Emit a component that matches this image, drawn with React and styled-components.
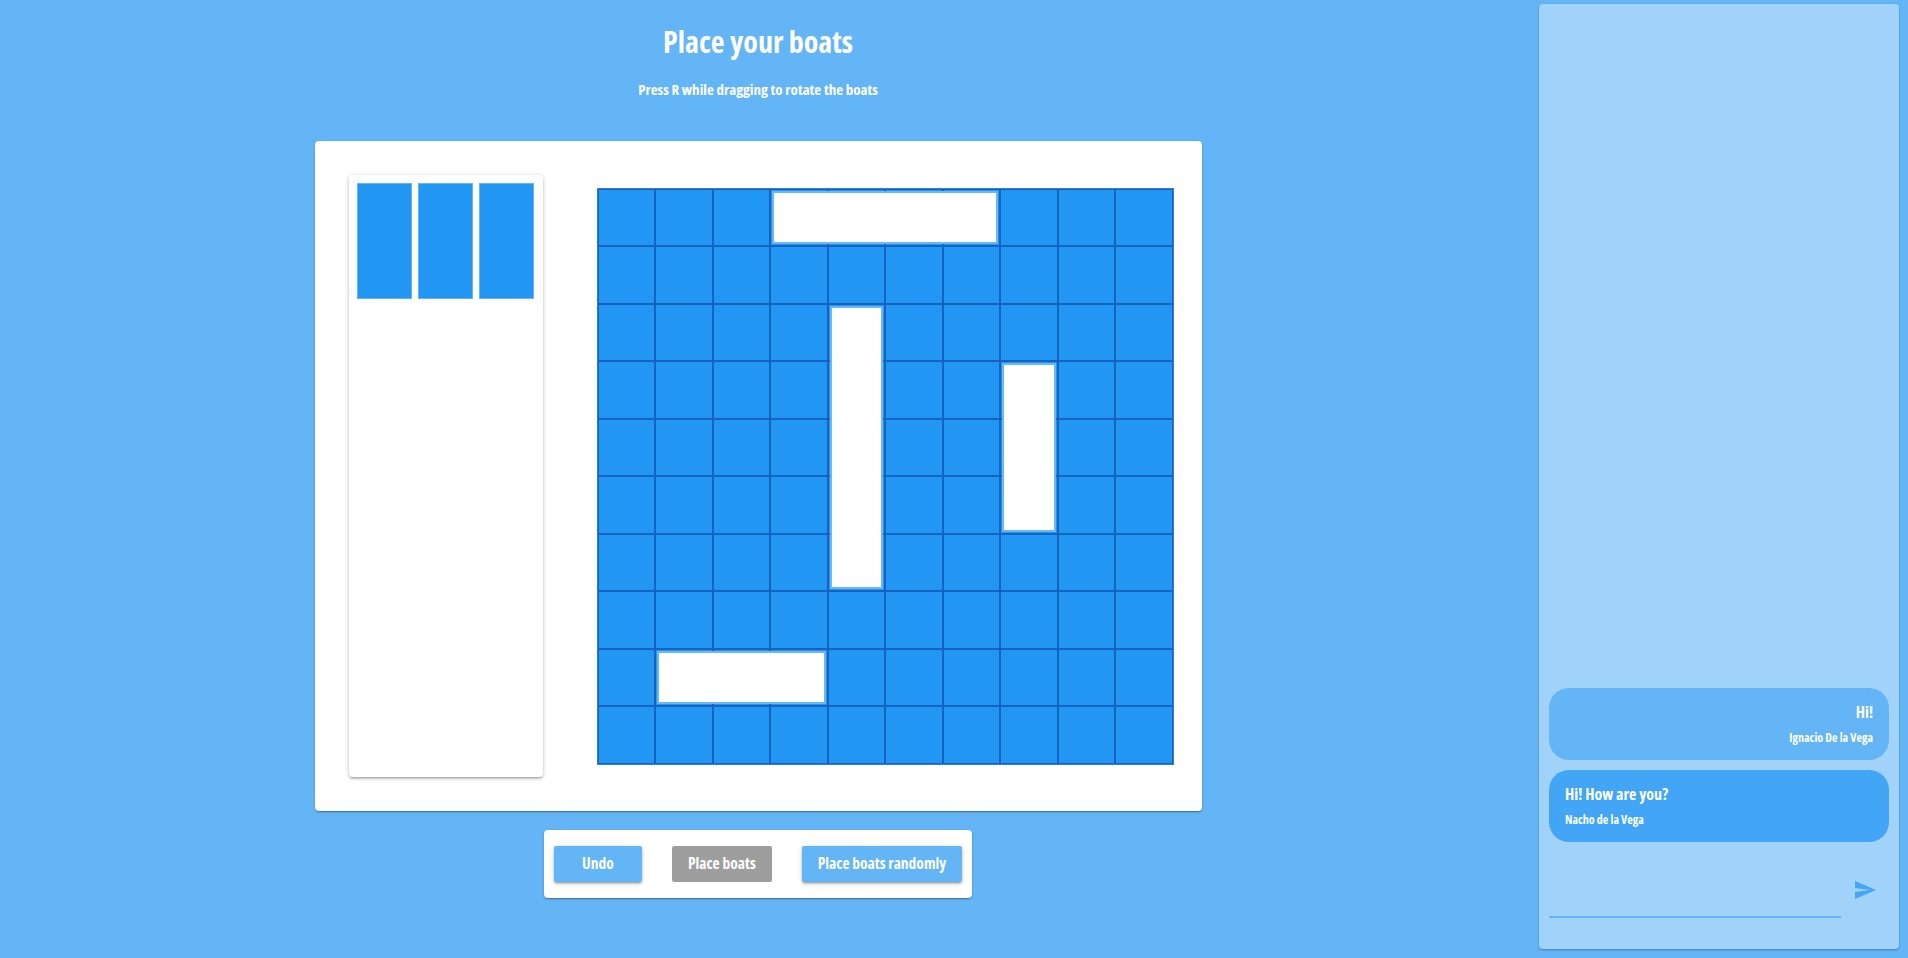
import React from 'react'
import styled, { createGlobalStyle } from 'styled-components'

const GlobalStyle = createGlobalStyle`
    html, body {
        margin:0;
        padding:0;
        background:#64b5f6;
        font-family:"Open Sans", "Liberation Sans", sans-serif;
        font-stretch:75%;
        font-weight:700;
        color:#fff;
    }
    * { box-sizing:border-box; }
`;

const ships = [
    { row: 1, col: 4, len: 4, dir: 'h' },
    { row: 3, col: 5, len: 5, dir: 'v' },
    { row: 4, col: 8, len: 3, dir: 'v' },
    { row: 9, col: 2, len: 3, dir: 'h' },
]

const cells = []
for (let r = 1; r <= 10; r++) {
    for (let c = 1; c <= 10; c++) cells.push({ r, c })
}

const messages = [
    { text: 'Hi!', author: 'Ignacio De la Vega', mine: true },
    { text: 'Hi! How are you?', author: 'Nacho de la Vega', mine: false },
]

const SendIcon = () => (
    <svg width="24" height="24" viewBox="0 0 24 24" fill="#42a5f5">
        <path d="M2.01 21L23 12 2.01 3 2 10l15 2-15 2z" />
    </svg>
)

const App = () => {
  return (
    <Page>
        <GlobalStyle />
        <Main>
            <Title>Place your boats</Title>
            <Subtitle>Press R while dragging to rotate the boats</Subtitle>
            <Board>
                <Holder>
                    <Boat />
                    <Boat />
                    <Boat />
                </Holder>
                <Grid>
                    {cells.map(({ r, c }) => (
                        <Cell key={`${r}-${c}`} $r={r} $c={c} />
                    ))}
                    {ships.map((s, i) => (
                        <Ship
                            key={i}
                            $row={s.dir === 'h' ? `${s.row}` : `${s.row} / span ${s.len}`}
                            $col={s.dir === 'h' ? `${s.col} / span ${s.len}` : `${s.col}`}
                        />
                    ))}
                </Grid>
            </Board>
            <ButtonBar>
                <Button>Undo</Button>
                <Button $disabled>Place boats</Button>
                <Button>Place boats randomly</Button>
            </ButtonBar>
        </Main>
        <Chat>
            <Messages>
                {messages.map((m, i) => (
                    <Message key={i} $mine={m.mine}>
                        <MessageText>{m.text}</MessageText>
                        <Author>{m.author}</Author>
                    </Message>
                ))}
            </Messages>
            <InputRow>
                <ChatInput />
                <SendButton><SendIcon /></SendButton>
            </InputRow>
        </Chat>
    </Page>
  )
}

const Page = styled.div`
    display:flex;
    height:100vh;
    overflow:hidden;
`;

const Main = styled.div`
    width:1516px;
    display:flex;
    flex-direction:column;
    align-items:center;
    padding-top:25px;
`;

const Title = styled.h1`
    margin:0;
    font-size:30px;
    line-height:34px;
    font-weight:700;
`;

const Subtitle = styled.p`
    margin:22px 0 0 0;
    font-size:15px;
    line-height:17px;
`;

const Board = styled.div`
    margin-top:43px;
    width:887px;
    height:670px;
    background:#fff;
    border-radius:4px;
    box-shadow:0 1px 3px rgba(0,0,0,0.2), 0 1px 1px rgba(0,0,0,0.14), 0 2px 1px -1px rgba(0,0,0,0.12);
    display:flex;
    align-items:center;
    gap:54px;
    padding:34px 28px 34px 34px;
`;

const Holder = styled.div`
    width:194px;
    height:602px;
    border-radius:4px;
    background:#fff;
    box-shadow:0 1px 5px rgba(0,0,0,0.2), 0 2px 2px rgba(0,0,0,0.14), 0 3px 1px -2px rgba(0,0,0,0.12);
    padding:8px;
    display:flex;
    align-items:flex-start;
    gap:6px;
`;

const Boat = styled.div`
    width:55px;
    height:116px;
    background:#2196f3;
    border:1px solid #64b5f6;
`;

const Grid = styled.div`
    width:577px;
    height:577px;
    display:grid;
    grid-template-columns:repeat(10, 1fr);
    grid-template-rows:repeat(10, 1fr);
    border:1px solid #2f7fd6;
`;

const Cell = styled.div`
    grid-row:${p => p.$r};
    grid-column:${p => p.$c};
    background:#2196f3;
    border:1px solid #1862bf;
`;

const Ship = styled.div`
    grid-row:${p => p.$row};
    grid-column:${p => p.$col};
    margin:2px;
    background:#fff;
    border:2px solid #6ab7f6;
    z-index:1;
`;

const ButtonBar = styled.div`
    margin-top:19px;
    background:#fff;
    border-radius:4px;
    box-shadow:0 1px 3px rgba(0,0,0,0.2), 0 1px 1px rgba(0,0,0,0.14), 0 2px 1px -1px rgba(0,0,0,0.12);
    padding:16px 10px;
    display:flex;
    gap:30px;
`;

const Button = styled.button`
    min-width:88px;
    height:36px;
    padding:0 16px 3px 16px;
    border:none;
    border-radius:2px;
    font-family:inherit;
    font-stretch:75%;
    font-weight:700;
    font-size:15.5px;
    color:#fff;
    background:${p => (p.$disabled ? '#9e9e9e' : '#64b5f6')};
    box-shadow:${p => (p.$disabled ? 'none' : '0 1px 5px rgba(0,0,0,0.2), 0 2px 2px rgba(0,0,0,0.14), 0 3px 1px -2px rgba(0,0,0,0.12)')};
    cursor:pointer;
`;

const Chat = styled.div`
    width:360px;
    margin:4px 9px 9px 23px;
    background:#a1d2fa;
    border-radius:4px;
    box-shadow:0 1px 3px rgba(0,0,0,0.2), 0 1px 1px rgba(0,0,0,0.1);
    display:flex;
    flex-direction:column;
    justify-content:flex-end;
    padding:0 10px 31px 10px;
`;

const Messages = styled.div`
    display:flex;
    flex-direction:column;
    gap:10px;
`;

const Message = styled.div`
    height:72px;
    border-radius:20px;
    background:${p => (p.$mine ? '#64b5f6' : '#42a5f5')};
    padding:14px 16px;
    display:flex;
    flex-direction:column;
    gap:8px;
    text-align:${p => (p.$mine ? 'right' : 'left')};
`;

const MessageText = styled.div`
    font-size:16px;
    line-height:20px;
`;

const Author = styled.div`
    font-size:12px;
    line-height:16px;
`;

const InputRow = styled.div`
    margin-top:24px;
    height:52px;
    display:flex;
`;

const ChatInput = styled.input`
    flex:1;
    align-self:flex-end;
    height:32px;
    border:none;
    border-bottom:2px solid #64b5f6;
    background:none;
    outline:none;
    font-family:inherit;
    font-size:16px;
    color:#fff;
`;

const SendButton = styled.button`
    width:48px;
    height:48px;
    border:none;
    background:none;
    padding:0;
    display:flex;
    align-items:center;
    justify-content:center;
    cursor:pointer;
`;

export default App
